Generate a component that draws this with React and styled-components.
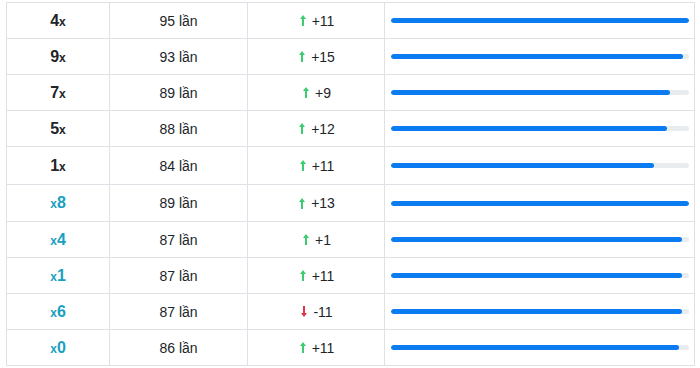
import styled, { createGlobalStyle } from "styled-components";

const GlobalStyle = createGlobalStyle`
  html, body {
    margin: 0;
    padding: 0;
    background: #fff;
  }
  body {
    font-family: "Liberation Sans", Arial, sans-serif;
    color: #212529;
  }
`;

const Wrap = styled.div`
  padding: 2px 5px 0 6px;
`;

const Table = styled.div`
  border-left: 1px solid #dee2e6;
  border-right: 1px solid #dee2e6;
  border-top: 1px solid #dee2e6;
`;

const Row = styled.div`
  display: grid;
  grid-template-columns: 103px 138px 137px 1fr;
  height: ${(p) => p.$h}px;
  box-sizing: border-box;
  border-bottom: 1px solid #dee2e6;
`;

const Cell = styled.div`
  display: flex;
  align-items: center;
  justify-content: ${(p) => (p.$left ? "flex-start" : "center")};
  padding: ${(p) => (p.$left ? "0 5px 0 6px" : "0 4px")};
  font-size: 14px;
  color: #212529;
  &:not(:last-child) {
    border-right: 1px solid #dee2e6;
  }
`;

const Num = styled.span`
  font-weight: 700;
  font-size: 16px;
  color: ${(p) => (p.$blue ? "#1a9fc0" : "#212529")};
`;

const Small = styled.span`
  font-weight: 700;
  font-size: 12px;
`;

const Trend = styled.span`
  display: inline-flex;
  align-items: center;
  gap: 6px;
  margin-left: 2px;
`;

const Track = styled.div`
  width: 100%;
  height: 5px;
  border-radius: 3px;
  background: #e9ecef;
  overflow: hidden;
`;

const Bar = styled.div`
  height: 100%;
  border-radius: 3px;
  background: #0a7bf0;
`;

function Arrow({ up }) {
  const color = up ? "#3ccb6f" : "#dc3545";
  return (
    <svg width="6" height="11" viewBox="0 0 6 11">
      {up ? (
        <>
          <path d="M3 0 L6 4 L0 4 Z" fill={color} />
          <rect x="2" y="3" width="2" height="8" fill={color} />
        </>
      ) : (
        <>
          <rect x="2" y="0" width="2" height="8" fill={color} />
          <path d="M3 11 L6 7 L0 7 Z" fill={color} />
        </>
      )}
    </svg>
  );
}

const rows = [
  { n: "4", suffix: true, count: 95, diff: 11, max: 95, h: 36 },
  { n: "9", suffix: true, count: 93, diff: 15, max: 95, h: 36 },
  { n: "7", suffix: true, count: 89, diff: 9, max: 95, h: 36 },
  { n: "5", suffix: true, count: 88, diff: 12, max: 95, h: 36 },
  { n: "1", suffix: true, count: 84, diff: 11, max: 95, h: 38 },
  { n: "8", suffix: false, count: 89, diff: 13, max: 89, h: 37 },
  { n: "4", suffix: false, count: 87, diff: 1, max: 89, h: 36 },
  { n: "1", suffix: false, count: 87, diff: 11, max: 89, h: 36 },
  { n: "6", suffix: false, count: 87, diff: -11, max: 89, h: 36 },
  { n: "0", suffix: false, count: 86, diff: 11, max: 89, h: 36 },
];

export default function App() {
  return (
    <Wrap>
      <GlobalStyle />
      <Table>
        {rows.map((r, i) => (
          <Row key={i} $h={r.h}>
            <Cell>
              {r.suffix ? (
                <Num>
                  {r.n}
                  <Small>x</Small>
                </Num>
              ) : (
                <Num $blue>
                  <Small>x</Small>
                  {r.n}
                </Num>
              )}
            </Cell>
            <Cell>{r.count} lần</Cell>
            <Cell>
              <Trend>
                <Arrow up={r.diff > 0} />
                {r.diff > 0 ? `+${r.diff}` : r.diff}
              </Trend>
            </Cell>
            <Cell $left>
              <Track>
                <Bar style={{ width: `${(r.count / r.max) * 100}%` }} />
              </Track>
            </Cell>
          </Row>
        ))}
      </Table>
    </Wrap>
  );
}
